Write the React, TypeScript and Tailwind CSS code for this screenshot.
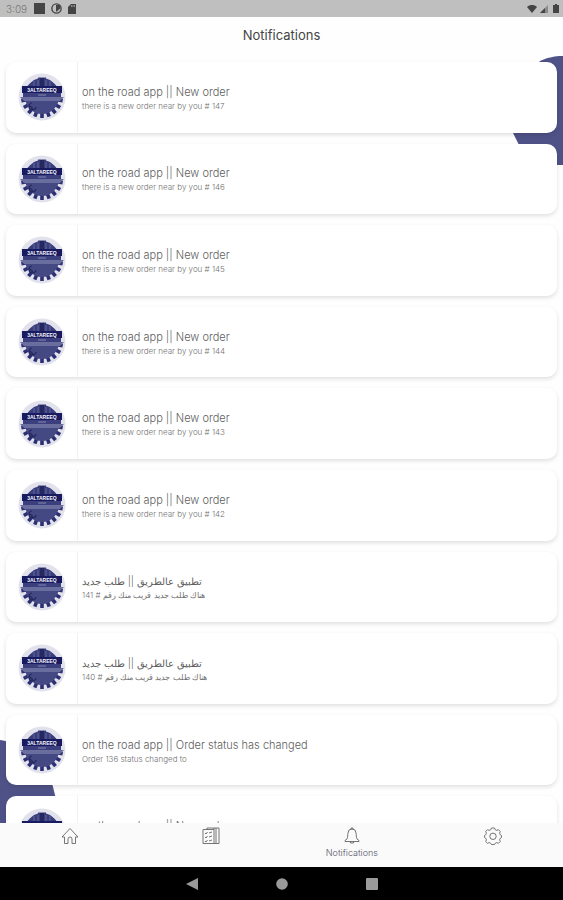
import { useState } from 'react';

interface Notification {
  id: number;
  title: string;
  body: string;
  arabic?: boolean;
}

const NOTIFICATIONS: Notification[] = [
  { id: 1, title: 'on the road app || New order', body: 'there is a new order near by you # 147' },
  { id: 2, title: 'on the road app || New order', body: 'there is a new order near by you # 146' },
  { id: 3, title: 'on the road app || New order', body: 'there is a new order near by you # 145' },
  { id: 4, title: 'on the road app || New order', body: 'there is a new order near by you # 144' },
  { id: 5, title: 'on the road app || New order', body: 'there is a new order near by you # 143' },
  { id: 6, title: 'on the road app || New order', body: 'there is a new order near by you # 142' },
  { id: 7, title: 'تطبيق عالطريق || طلب جديد', body: 'هناك طلب جديد قريب منك رقم # 141', arabic: true },
  { id: 8, title: 'تطبيق عالطريق || طلب جديد', body: 'هناك طلب جديد قريب منك رقم # 140', arabic: true },
  { id: 9, title: 'on the road app || Order status has changed', body: 'Order 136 status changed to' },
  { id: 10, title: 'on the road app || New order', body: 'there is a new order near by you # 136' },
];

const TEETH = [-80, -60, -40, -20, 0, 20, 40, 60, 80];

function Logo() {
  return (
    <svg className="size-12" viewBox="0 0 48 48" aria-hidden="true">
      <circle cx="24" cy="24" r="23.5" fill="#e2e2ec" />
      {TEETH.map((angle) => (
        <rect key={angle} x="22.2" y="38" width="3.6" height="7" fill="#2c3073" transform={`rotate(${angle} 24 24)`} />
      ))}
      <path d="M7 24a17 17 0 0 0 34 0z" fill="#454983" />
      <path d="M9 14c1-2 4-5 7-7l4-1.500V4.500h8v1L32 7c3 2 6 5 7 7z" fill="#393d7c" />
      <path d="M16 8v6M20 7v7M28 7v7M32 8v6" stroke="#6d71a6" strokeWidth="0.8" />
      <path d="M22 5h4v9h-4z" fill="#24285f" />
      <path d="M4 13h40v7H4z" fill="#191b60" />
      <path d="M5 20h38v4H5z" fill="#3b3f7d" />
      <path d="M2 24h44l-4 4H6z" fill="#6a6e9e" />
      <path d="M14 30a3.500 3.500 0 1 0 4 4M12 33l3 3" fill="none" stroke="#24285f" strokeWidth="1.2" />
      <path d="M20 22h8" stroke="#8589b5" strokeWidth="1" />
      <text x="24" y="18.5" textAnchor="middle" fill="#f4f4fa" fontSize="5" fontWeight="700" fontFamily="Liberation Sans, sans-serif">
        3ALTAREEQ
      </text>
    </svg>
  );
}

function StatusBar() {
  return (
    <div className="flex h-[17px] shrink-0 items-center justify-between bg-[#bfbfbf] pr-1 pl-1.5 text-[#444]">
      <div className="flex items-center gap-1.5">
        <span className="w-[22px] text-[10px] leading-4 text-[#777]">3:09</span>
        <svg className="size-[11px]" viewBox="0 0 11 11" aria-hidden="true">
          <path d="M0 0h11v11H0z" fill="currentColor" />
        </svg>
        <svg className="size-[11px]" viewBox="0 0 11 11" aria-hidden="true">
          <circle cx="5.5" cy="5.5" r="4.6" fill="none" stroke="currentColor" strokeWidth="1.4" />
          <path d="M5 2h4v3.500L6 8.500H5z" fill="currentColor" />
        </svg>
        <svg className="h-[10px] w-[8px]" viewBox="0 0 8 10" aria-hidden="true">
          <path d="M3 0h5v10H0V3z" fill="currentColor" />
          <path d="M3.500 1v2M5 1v2M6.500 1v2" stroke="#bfbfbf" strokeWidth="0.6" />
        </svg>
      </div>
      <div className="flex items-center gap-[3px]">
        <svg className="h-[8px] w-[10px]" viewBox="0 0 10 8" aria-hidden="true">
          <path d="M0 2c3-2.600 7-2.600 10 0L5 8z" fill="currentColor" />
        </svg>
        <svg className="size-[8px]" viewBox="0 0 8 8" aria-hidden="true">
          <path d="M8 0v8H0z" fill="#8a8a8a" />
          <path d="M5 3v5H0z" fill="currentColor" />
        </svg>
        <svg className="ml-0.5 h-[9px] w-[6px]" viewBox="0 0 6 9" aria-hidden="true">
          <path d="M2 0h2v1h2v8H0V1h2z" fill="currentColor" />
        </svg>
      </div>
    </div>
  );
}

function NotificationCard({ title, body, arabic }: Notification) {
  return (
    <li className="flex items-stretch rounded-[10px] bg-white shadow-[0_2px_4px_rgba(0,0,0,0.12)]">
      <div className="flex w-[72px] shrink-0 items-center justify-center border-r border-[#f1f1f1]">
        <Logo />
      </div>
      <div className="flex min-w-0 flex-col justify-center pt-px pl-1" lang={arabic ? 'ar' : 'en'}>
        <h2 className={`leading-4 text-[#606060] ${arabic ? 'text-[10px]' : 'text-[11px]'}`}>{title}</h2>
        <p className="text-[8px] leading-3 text-[#707070]">{body}</p>
      </div>
    </li>
  );
}

const TABS = [
  {
    name: 'Home',
    icon: <path d="M1 10 9 1.500 17 10h-2.500v6.500h-3.500v-4.500a2 2 0 0 0-4 0v4.500H3.500V10z" />,
  },
  {
    name: 'Orders',
    icon: (
      <>
        <path d="M1 2.500h11v14H1zM5 2.500V1h7v1.500M12 1h5v15.500h-5M14 1v15" />
        <path d="m3 6 1 1 1.500-2M3 10l1 1 1.500-2M3 14l1 1 1.500-2M7 6l3-1M7 10l3-1M7 14l3-1" />
      </>
    ),
  },
  {
    name: 'Notifications',
    icon: (
      <>
        <path d="M4 12c1-2 .5-4 1-6a4 4 0 0 1 8 0c.5 2 0 4 1 6l2 1.500v1H2v-1zM8 2.500V1h2v1.500" />
        <path d="M7.500 14.500v1.500h3v-1.500" />
      </>
    ),
  },
  {
    name: 'Settings',
    icon: (
      <>
        <path d="M7.500 1h3l.7 1.700 1.600.7 1.700-.7 1.800 1.800-.7 1.700.7 1.600 1.200.7v2l-1.200.7-.7 1.600.7 1.700-1.800 1.800-1.700-.7-1.600.7-.7 1.200h-3l-.7-1.200-1.600-.7-1.700.7-1.800-1.800.7-1.700-.7-1.600L.5 10.500v-2l1.200-.7.7-1.600-.7-1.700 1.800-1.800 1.700.7 1.600-.7z" />
        <circle cx="9" cy="9.300" r="3.200" />
      </>
    ),
  },
];

export default function App() {
  const [activeTab, setActiveTab] = useState('Notifications');

  return (
    <div className="flex h-screen flex-col overflow-hidden bg-[#fefefe] font-['Inter','DejaVu_Sans',sans-serif] font-light">
      <StatusBar />

      <header className="flex h-9 shrink-0 items-center justify-center">
        <h1 className="text-[13px] leading-5 font-normal text-[#444]">Notifications</h1>
      </header>

      <main className="relative min-h-0 flex-1 overflow-hidden">
        <svg className="absolute top-[3px] right-0 h-[109px] w-[60px]" viewBox="0 0 60 109" aria-hidden="true">
          <path d="M60 0C51 0 43 2 37 5L8 40v33l8 16 22 20h22z" fill="#4f5286" />
        </svg>
        <svg className="absolute bottom-0 left-0 h-[83px] w-[60px]" viewBox="0 0 60 83" aria-hidden="true">
          <path d="M0 0c8 1 18 4 28 9l24 34 4 16-4 24H0z" fill="#4f5286" />
        </svg>
        <div className="relative h-full overflow-y-auto px-1.5 pt-[9px] [scrollbar-width:none]">
          <ul className="grid min-h-[805px] auto-rows-fr gap-[11px]">
            {NOTIFICATIONS.map((item) => (
              <NotificationCard key={item.id} {...item} />
            ))}
          </ul>
        </div>
      </main>

      <nav className="grid h-11 shrink-0 grid-cols-4 bg-[#fafafa]">
        {TABS.map((tab) => (
          <button
            key={tab.name}
            type="button"
            aria-label={tab.name}
            onClick={() => setActiveTab(tab.name)}
            className="flex flex-col items-center pt-1 text-[#666]"
          >
            <svg
              className="size-[18px]"
              viewBox="0 0 18 18"
              fill="none"
              stroke="currentColor"
              strokeWidth="0.9"
              strokeLinejoin="round"
              aria-hidden="true"
            >
              {tab.icon}
            </svg>
            {activeTab === tab.name && <span className="text-[9px] leading-4 text-[#55556a]">{tab.name}</span>}
          </button>
        ))}
      </nav>

      <div className="flex h-[33px] shrink-0 items-center justify-center gap-[78px] bg-black text-[#9a9a9a]">
        <button type="button" aria-label="Back">
          <svg className="size-3" viewBox="0 0 12 12" aria-hidden="true">
            <path d="M12 0v12L0 6z" fill="currentColor" />
          </svg>
        </button>
        <button type="button" aria-label="Home screen">
          <svg className="size-3" viewBox="0 0 12 12" aria-hidden="true">
            <circle cx="6" cy="6" r="5.800" fill="currentColor" />
          </svg>
        </button>
        <button type="button" aria-label="Recent apps">
          <svg className="size-3" viewBox="0 0 12 12" aria-hidden="true">
            <rect width="12" height="12" rx="1" fill="currentColor" />
          </svg>
        </button>
      </div>
    </div>
  );
}
